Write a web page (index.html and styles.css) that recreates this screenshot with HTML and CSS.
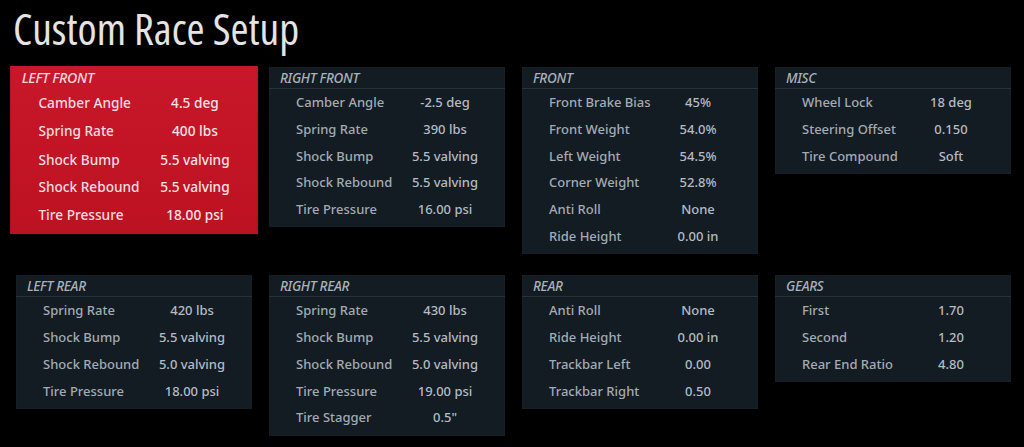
FILE: index.html
```html
<!DOCTYPE html>
<html>
<head>
<meta charset="utf-8">
<link rel="stylesheet" href="styles.css">
</head>
<body>
<div class="page">
  <h1 class="title">Custom Race Setup</h1>
  <div class="grid">
    <section class="panel selected">
      <div class="ph">LEFT FRONT</div>
      <div class="rows">
        <div class="row"><span class="k">Camber Angle</span><span class="v">4.5 deg</span></div>
        <div class="row"><span class="k">Spring Rate</span><span class="v">400 lbs</span></div>
        <div class="row"><span class="k">Shock Bump</span><span class="v">5.5 valving</span></div>
        <div class="row"><span class="k">Shock Rebound</span><span class="v">5.5 valving</span></div>
        <div class="row"><span class="k">Tire Pressure</span><span class="v">18.00 psi</span></div>
      </div>
    </section>
    <section class="panel">
      <div class="ph">RIGHT FRONT</div>
      <div class="rows">
        <div class="row"><span class="k">Camber Angle</span><span class="v">-2.5 deg</span></div>
        <div class="row"><span class="k">Spring Rate</span><span class="v">390 lbs</span></div>
        <div class="row"><span class="k">Shock Bump</span><span class="v">5.5 valving</span></div>
        <div class="row"><span class="k">Shock Rebound</span><span class="v">5.5 valving</span></div>
        <div class="row"><span class="k">Tire Pressure</span><span class="v">16.00 psi</span></div>
      </div>
    </section>
    <section class="panel">
      <div class="ph">FRONT</div>
      <div class="rows">
        <div class="row"><span class="k">Front Brake Bias</span><span class="v">45%</span></div>
        <div class="row"><span class="k">Front Weight</span><span class="v">54.0%</span></div>
        <div class="row"><span class="k">Left Weight</span><span class="v">54.5%</span></div>
        <div class="row"><span class="k">Corner Weight</span><span class="v">52.8%</span></div>
        <div class="row"><span class="k">Anti Roll</span><span class="v">None</span></div>
        <div class="row"><span class="k">Ride Height</span><span class="v">0.00 in</span></div>
      </div>
    </section>
    <section class="panel">
      <div class="ph">MISC</div>
      <div class="rows">
        <div class="row"><span class="k">Wheel Lock</span><span class="v">18 deg</span></div>
        <div class="row"><span class="k">Steering Offset</span><span class="v">0.150</span></div>
        <div class="row"><span class="k">Tire Compound</span><span class="v">Soft</span></div>
      </div>
    </section>

    <section class="panel">
      <div class="ph">LEFT REAR</div>
      <div class="rows">
        <div class="row"><span class="k">Spring Rate</span><span class="v">420 lbs</span></div>
        <div class="row"><span class="k">Shock Bump</span><span class="v">5.5 valving</span></div>
        <div class="row"><span class="k">Shock Rebound</span><span class="v">5.0 valving</span></div>
        <div class="row"><span class="k">Tire Pressure</span><span class="v">18.00 psi</span></div>
      </div>
    </section>
    <section class="panel">
      <div class="ph">RIGHT REAR</div>
      <div class="rows">
        <div class="row"><span class="k">Spring Rate</span><span class="v">430 lbs</span></div>
        <div class="row"><span class="k">Shock Bump</span><span class="v">5.5 valving</span></div>
        <div class="row"><span class="k">Shock Rebound</span><span class="v">5.0 valving</span></div>
        <div class="row"><span class="k">Tire Pressure</span><span class="v">19.00 psi</span></div>
        <div class="row"><span class="k">Tire Stagger</span><span class="v">0.5"</span></div>
      </div>
    </section>
    <section class="panel">
      <div class="ph">REAR</div>
      <div class="rows">
        <div class="row"><span class="k">Anti Roll</span><span class="v">None</span></div>
        <div class="row"><span class="k">Ride Height</span><span class="v">0.00 in</span></div>
        <div class="row"><span class="k">Trackbar Left</span><span class="v">0.00</span></div>
        <div class="row"><span class="k">Trackbar Right</span><span class="v">0.50</span></div>
      </div>
    </section>
    <section class="panel">
      <div class="ph">GEARS</div>
      <div class="rows">
        <div class="row"><span class="k">First</span><span class="v">1.70</span></div>
        <div class="row"><span class="k">Second</span><span class="v">1.20</span></div>
        <div class="row"><span class="k">Rear End Ratio</span><span class="v">4.80</span></div>
      </div>
    </section>
  </div>
</div>
</body>
</html>
```

FILE: styles.css
```css
html, body {
  margin: 0;
  padding: 0;
  background: #000;
}
body {
  width: 1024px;
  height: 447px;
  overflow: hidden;
  font-family: "Noto Sans", "Open Sans", sans-serif;
}
.page {
  padding: 0 0 0 16px;
}
.title {
  margin: 0 0 0 -3px;
  height: 67px;
  font-family: "Open Sans", sans-serif;
  font-weight: 380;
  font-stretch: 75%;
  font-size: 43.5px;
  line-height: 58px;
  color: #e4e4e4;
}
.grid {
  display: grid;
  grid-template-columns: repeat(4, 236px);
  column-gap: 17px;
  row-gap: 21px;
  align-items: start;
}
.panel {
  background: #131b23;
  box-shadow: inset 0 0 0 1px #161f28;
  padding-bottom: 5px;
}
.ph {
  height: 21px;
  padding-left: 11px;
  border-bottom: 1px solid #26313a;
  font-style: italic;
  font-weight: 500;
  font-size: 13.5px;
  line-height: 22px;
  color: #a9b1ba;
  letter-spacing: -0.3px;
}
.rows {
  display: flex;
  flex-direction: column;
}
.row {
  display: grid;
  grid-template-columns: 109px 80px;
  height: 26.7px;
  align-items: center;
  padding-left: 27px;
  font-size: 13px;
  font-weight: 500;
  color: #a3abb3;
}
.k {
  white-space: nowrap;
}
.v {
  text-align: center;
  white-space: nowrap;
  color: #b3bbc3;
}
.panel.selected {
  background: linear-gradient(180deg, #c8172a 0%, #bd1222 100%);
  box-shadow: none;
  transform: translateY(3px) scale(1.05);
  position: relative;
  z-index: 2;
}
.selected .ph {
  border-bottom-color: transparent;
  color: #f4d8dc;
}
.selected .row {
  color: #f5dde0;
}
.selected .v {
  color: #f8e4e6;
}
```
